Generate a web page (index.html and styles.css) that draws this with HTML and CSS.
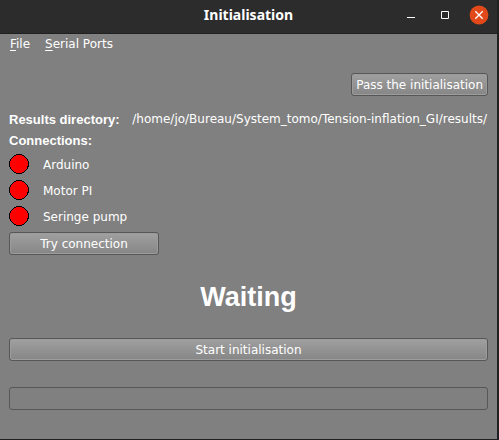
FILE: index.html
```html
<!DOCTYPE html>
<html lang="en">
<head>
<meta charset="utf-8">
<title>Initialisation</title>
<link rel="stylesheet" href="styles.css">
</head>
<body>
<div class="window">
  <header class="titlebar">
    <h1 class="title">Initialisation</h1>
    <div class="controls">
      <button class="control" type="button" aria-label="Minimise">
        <svg width="20" height="20" viewBox="0 0 20 20"><path d="M6 12.5h8" stroke="#fff" fill="none"/></svg>
      </button>
      <button class="control" type="button" aria-label="Maximise">
        <svg width="20" height="20" viewBox="0 0 20 20"><path d="M6.5 6.5h7v7h-7z" stroke="#fff" fill="none"/></svg>
      </button>
      <button class="control" type="button" aria-label="Close">
        <svg width="20" height="20" viewBox="0 0 20 20"><circle cx="10" cy="10" r="9.4" fill="#e2491a"/><path d="M6.3 6.3l7.4 7.4M13.7 6.3l-7.4 7.4" stroke="#fff" stroke-width="1.3" fill="none"/></svg>
      </button>
    </div>
  </header>
  <nav class="menubar">
    <button class="menu" type="button"><span class="key">F</span>ile</button>
    <button class="menu" type="button"><span class="key">S</span>erial Ports</button>
  </nav>
  <main class="content">
    <button class="button pass" type="button">Pass the initialisation</button>
    <div class="directory">
      <h2 class="heading">Results directory:</h2>
      <span>/home/jo/Bureau/System_tomo/Tension-inflation_GI/results/</span>
    </div>
    <h2 class="heading">Connections:</h2>
    <ul class="connections">
      <li class="connection"><svg class="light" width="20" height="20" viewBox="0 0 20 20"><circle cx="10" cy="10" r="9.5"/></svg>Arduino</li>
      <li class="connection"><svg class="light" width="20" height="20" viewBox="0 0 20 20"><circle cx="10" cy="10" r="9.5"/></svg>Motor PI</li>
      <li class="connection"><svg class="light" width="20" height="20" viewBox="0 0 20 20"><circle cx="10" cy="10" r="9.5"/></svg>Seringe pump</li>
    </ul>
    <button class="button try" type="button">Try connection</button>
    <p class="status">Waiting</p>
    <button class="button" type="button">Start initialisation</button>
    <div class="progress" role="progressbar" aria-label="Initialisation progress" aria-valuemin="0" aria-valuemax="100"></div>
  </main>
</div>
</body>
</html>
```
FILE: styles.css
```css
* {
  box-sizing: border-box;
}

body {
  margin: 0;
  min-height: 100vh;
  display: flex;
  padding: 0 2px 1px 0;
  background: #1f2023;
  color: #fff;
  font: 12px/20px "DejaVu Sans", sans-serif;
}

.window {
  flex: 1;
  background: #808080;
}

button {
  margin: 0;
  border: 0;
  padding: 0;
  background: none;
  color: inherit;
  font: inherit;
}

.titlebar {
  display: grid;
  grid-template-columns: 1fr auto 1fr;
  align-items: center;
  height: 34px;
  padding: 0 8px 3px;
  background: #2c2c2c;
  border-bottom: 1px solid #202020;
}

.title {
  grid-column: 2;
  margin: 0;
  font: bold 14px/20px "Noto Sans", sans-serif;
}

.controls {
  display: flex;
  justify-content: flex-end;
  gap: 14px;
}

.control,
.control svg {
  display: block;
}

.menubar {
  display: flex;
  gap: 15px;
  padding: 0 10px;
}

.key {
  text-decoration: underline 1px;
  text-underline-offset: 2px;
}

.content {
  display: flex;
  flex-direction: column;
  padding: 19px 9px 28px;
}

.button {
  height: 23px;
  padding: 1px 4px 0;
  border: 1px solid #575757;
  border-radius: 3px;
  background: linear-gradient(#a0a0a0, #868686);
  box-shadow: inset 0 0 0 1px #9c9c9c;
  line-height: 20px;
}

.pass {
  align-self: flex-end;
}

.directory {
  display: flex;
  justify-content: space-between;
  margin-top: 13px;
  padding-right: 1px;
  line-height: 21px;
  white-space: nowrap;
}

.heading {
  margin: 0;
  font: bold 13px/21px "Liberation Sans", sans-serif;
}

.connections {
  display: grid;
  gap: 6px;
  margin: 3px 0 6px;
  padding: 0;
  list-style: none;
  line-height: 22px;
}

.connection {
  display: flex;
  gap: 14px;
  height: 20px;
}

.light {
  fill: #f00;
  stroke: #000;
  shape-rendering: crispEdges;
}

.try {
  width: 150px;
}

.status {
  margin: 23px 0 21px;
  font: bold 27px/39px "Liberation Sans", sans-serif;
  text-align: center;
}

.progress {
  height: 23px;
  margin-top: 26px;
  border: 1px solid #575757;
  border-radius: 3px;
}
```
